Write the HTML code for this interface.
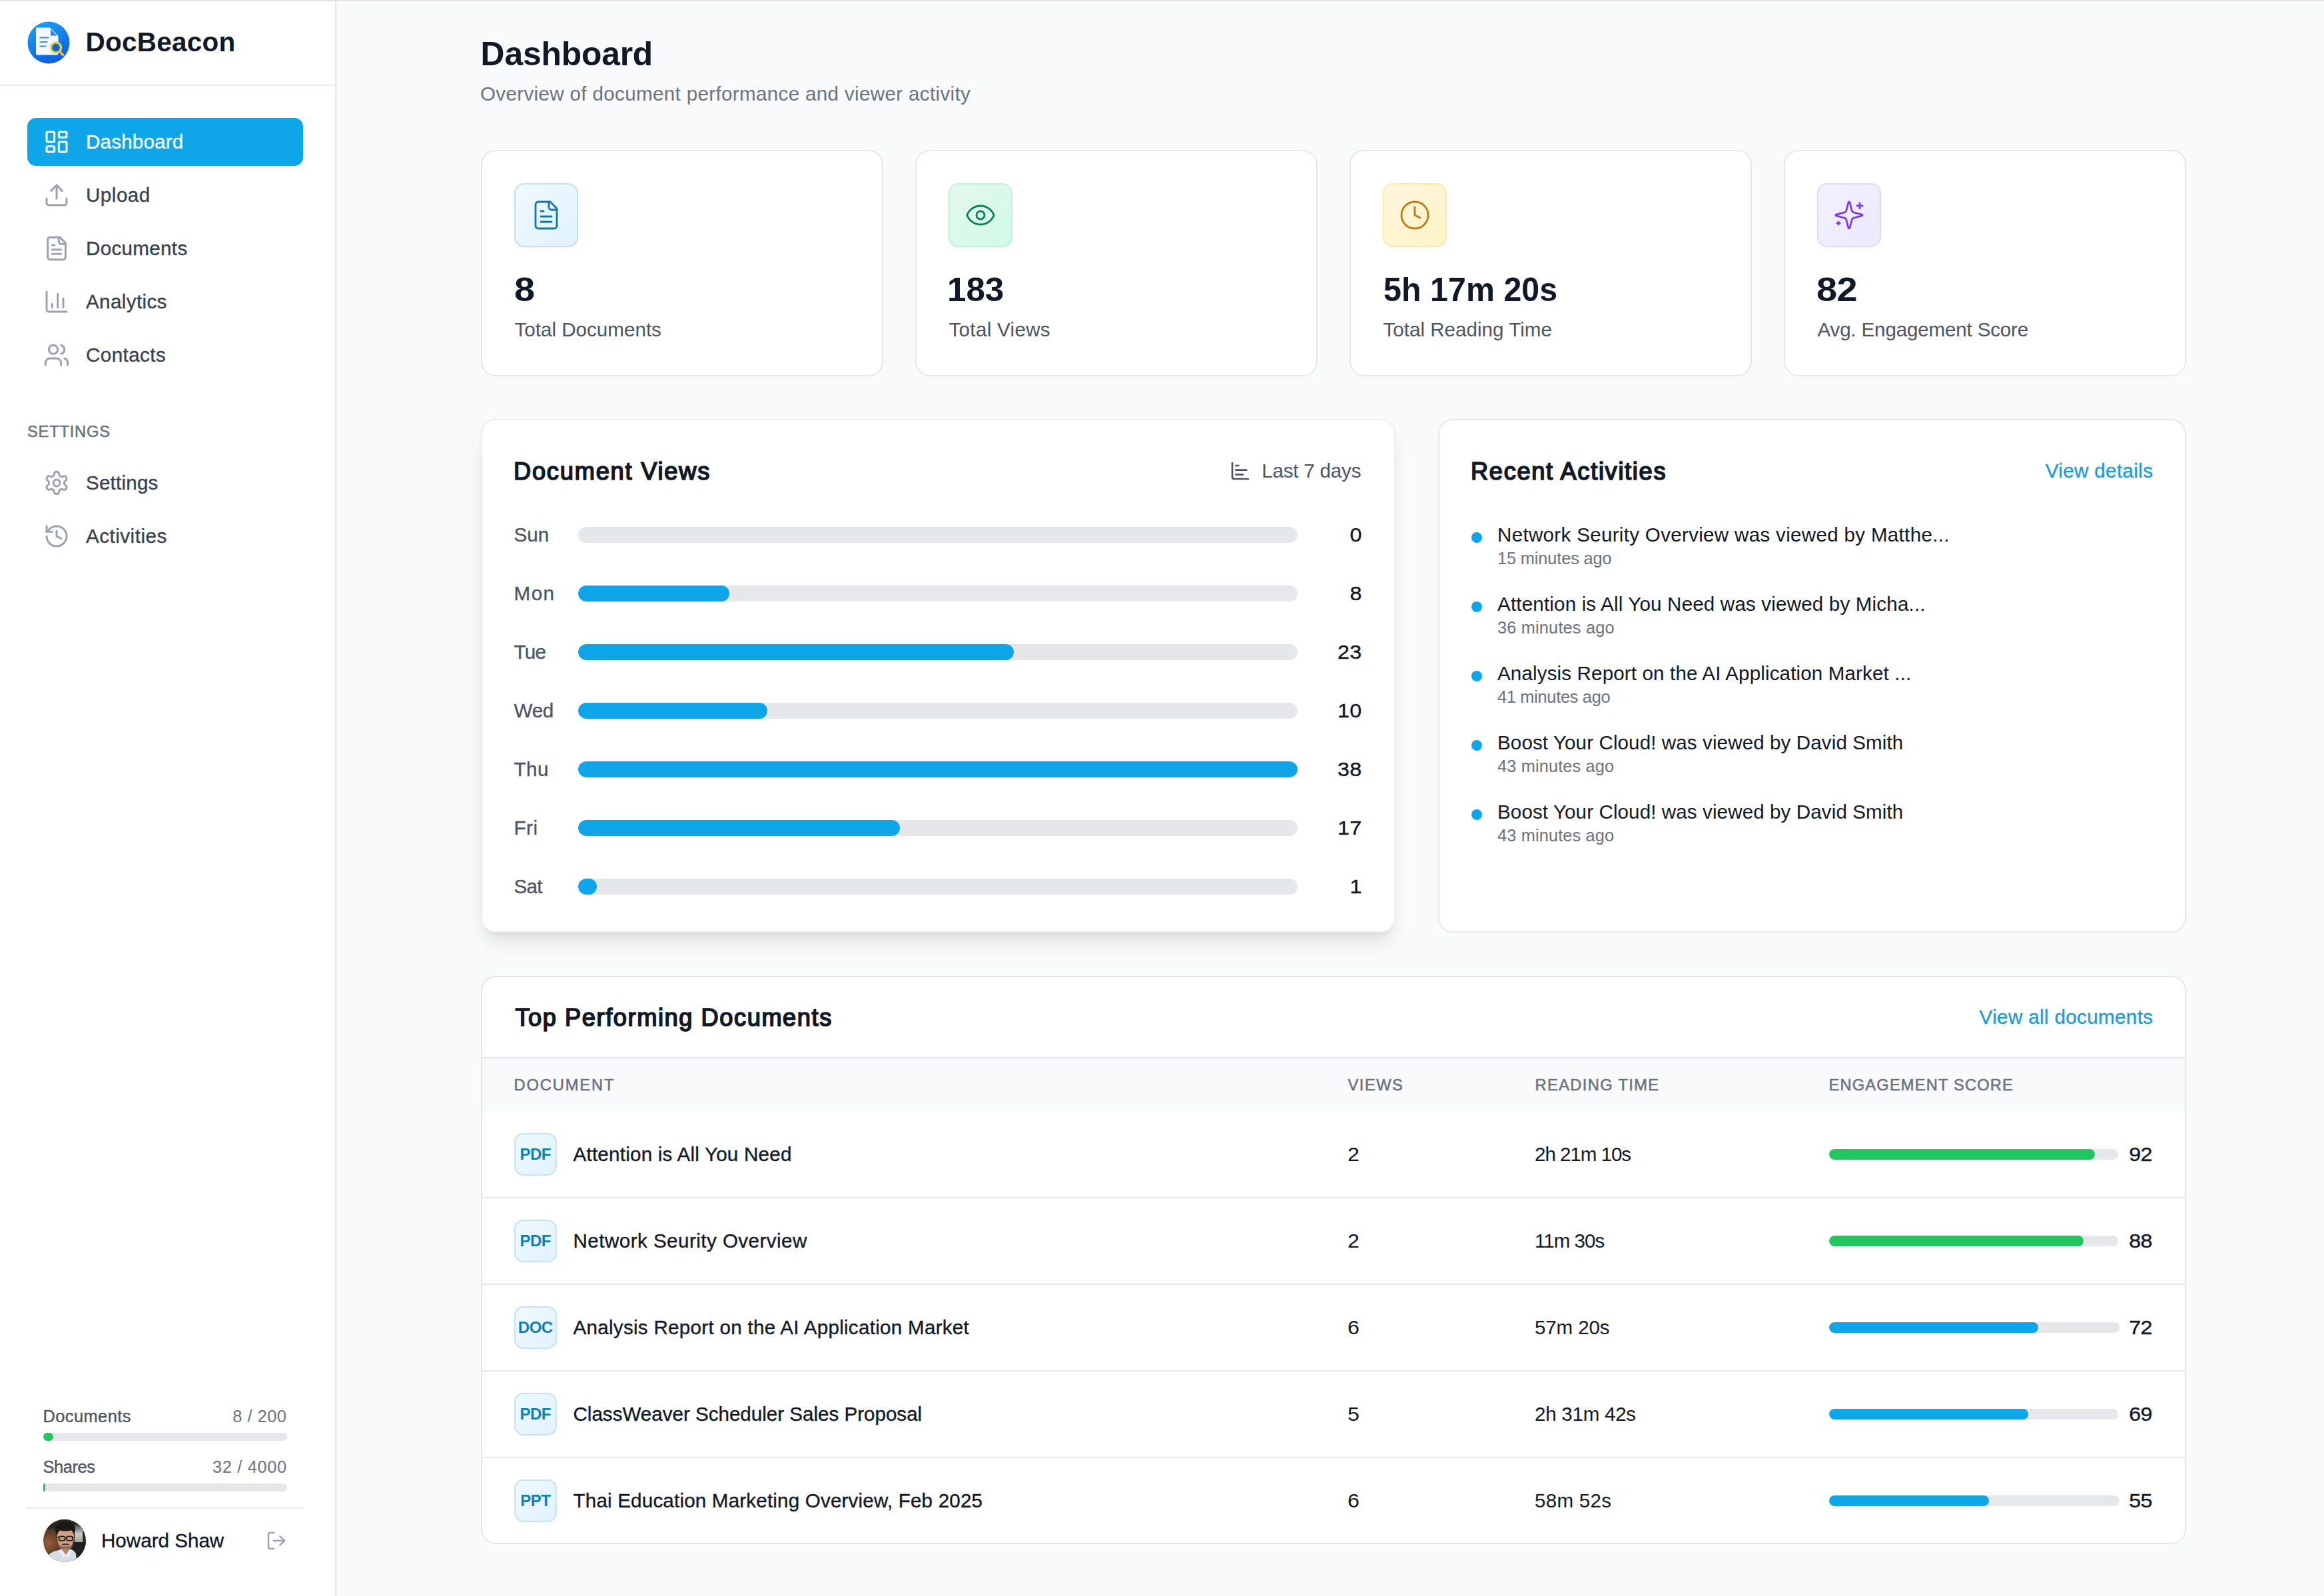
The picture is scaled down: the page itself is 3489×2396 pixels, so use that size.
<!DOCTYPE html>
<html lang="en">
<head>
<meta charset="utf-8">
<title>DocBeacon - Dashboard</title>
<style>
*{box-sizing:border-box;margin:0;padding:0}
html,body{width:3489px;height:2396px;overflow:hidden}
body{font-family:"Liberation Sans",sans-serif;background:#f9fafb;color:#111827;position:relative}
.abs{position:absolute}
.t{position:absolute;white-space:nowrap;line-height:1}
svg.ic{position:absolute;fill:none;stroke-width:1.5;stroke-linecap:round;stroke-linejoin:round}
#topline{left:0;top:0;width:3489px;height:2px;background:linear-gradient(#dcdee2,#e9ebee)}
#topband{left:505px;top:2px;width:2984px;height:4px;background:#fcfcfd}
#sidebar{left:0;top:0;width:505px;height:2396px;background:#fff;border-right:2px solid #e8eaed}
#brandline{left:0;top:127px;width:503px;height:2px;background:#e8eaed}
#navactive{left:41px;top:177px;width:414px;height:72px;border-radius:13px;background:#0ea5e9}
.qbar{position:absolute;left:65px;width:366px;height:12px;border-radius:6px;background:#e5e7eb}
.qbar i{display:block;height:12px;border-radius:6px;background:#22c55e}
#sideline{left:40px;top:2263px;width:416px;height:2px;background:#e8eaed}
.card{position:absolute;background:#fff;border:2px solid #e6e7eb;border-radius:22px}
.stat{top:225px;width:604px;height:340px}
.ibox{position:absolute;left:48px;top:48px;box-shadow:0 2px 4px rgba(0,0,0,.04);width:96px;height:96px;border-radius:15px;border:2px solid}
.ibox svg{position:absolute;left:22px;top:22px;width:48px;height:48px;fill:none;stroke-width:1.4;stroke-linecap:round;stroke-linejoin:round}
.vbar{position:absolute;left:868px;width:1080px;height:24px;border-radius:12px;background:#e5e7eb;overflow:hidden}
.vbar i{display:block;height:24px;border-radius:12px;background:#0ea5e9}
.dot{width:16px;height:16px;border-radius:8px;background:#0ea5e9}
.badge{width:64px;height:64px;border-radius:14px;border:2px solid #c5e3f4;background:linear-gradient(135deg,#f0f9ff,#e0f2fe)}
.sbar{position:absolute;left:2746px;width:434px;height:16px;border-radius:8px;background:#e5e7eb;overflow:hidden}
.sbar i{display:block;height:16px;border-radius:8px}

</style>
</head>
<body>
<div class="abs" id="sidebar"></div>
<div class="abs" id="topline"></div><div class="abs" id="topband"></div>
<div class="abs" id="brandline"></div>
<svg class="abs" id="logo" style="left:41px;top:32px;width:64px;height:64px" viewBox="0 0 64 64">
<defs><linearGradient id="lg" x1="0.25" y1="0" x2="0.7" y2="1"><stop offset="0" stop-color="#1ca0f2"/><stop offset="1" stop-color="#0c5be0"/></linearGradient></defs>
<circle cx="32" cy="32" r="31.500" fill="url(#lg)"/>
<path d="M15 9.500h19L46.500 22v26.500a2 2 0 0 1-2 2H15a2 2 0 0 1-2-2v-37a2 2 0 0 1 2-2z" fill="#f5f9fd"/>
<path d="M35 12v9.500h9.500z" fill="#2f7fe2"/>
<path d="M19.500 24.500h12M19.500 31h10M19.500 37.500h8" stroke="#2f8fe6" stroke-width="2.200" stroke-linecap="round" fill="none"/>
<circle cx="43" cy="39.500" r="7.600" fill="#1766c8" stroke="#d9d65a" stroke-width="3.400"/>
<path d="M49.300 46l4.200 4.300" stroke="#e2b53c" stroke-width="3.800" stroke-linecap="round"/>
</svg>
<div class="abs" id="navactive"></div>
<svg class="ic" id="ni0" style="left:65px;top:193px;width:40px;height:40px;stroke:#fff;stroke-width:1.8" viewBox="0 0 24 24"><rect x="3" y="3" width="7" height="9" rx="1"/><rect x="14" y="3" width="7" height="5" rx="1"/><rect x="14" y="12" width="7" height="9" rx="1"/><rect x="3" y="16" width="7" height="5" rx="1"/></svg>
<svg class="ic" id="ni1" style="left:65px;top:273px;width:40px;height:40px;stroke:#9ca3af;stroke-width:1.8" viewBox="0 0 24 24"><path d="M21 15v4a2 2 0 0 1-2 2H5a2 2 0 0 1-2-2v-4"/><path d="m17 8-5-5-5 5"/><path d="M12 3v12"/></svg>
<svg class="ic" id="ni2" style="left:65px;top:353px;width:40px;height:40px;stroke:#9ca3af;stroke-width:1.8" viewBox="0 0 24 24"><path d="M15 2H6a2 2 0 0 0-2 2v16a2 2 0 0 0 2 2h12a2 2 0 0 0 2-2V7Z"/><path d="M14 2v4a2 2 0 0 0 2 2h4"/><path d="M10 9H8"/><path d="M16 13H8"/><path d="M16 17H8"/></svg>
<svg class="ic" id="ni3" style="left:65px;top:433px;width:40px;height:40px;stroke:#9ca3af;stroke-width:1.8" viewBox="0 0 24 24"><path d="M3 3v16a2 2 0 0 0 2 2h16"/><path d="M18 17V9"/><path d="M13 17V5"/><path d="M8 17v-3"/></svg>
<svg class="ic" id="ni4" style="left:65px;top:513px;width:40px;height:40px;stroke:#9ca3af;stroke-width:1.8" viewBox="0 0 24 24"><path d="M16 21v-2a4 4 0 0 0-4-4H6a4 4 0 0 0-4 4v2"/><circle cx="9" cy="7" r="4"/><path d="M22 21v-2a4 4 0 0 0-3-3.87"/><path d="M16 3.13a4 4 0 0 1 0 7.75"/></svg>
<svg class="ic" id="ni5" style="left:65px;top:705px;width:40px;height:40px;stroke:#9ca3af;stroke-width:1.8" viewBox="0 0 24 24"><path d="M12.22 2h-.44a2 2 0 0 0-2 2v.18a2 2 0 0 1-1 1.73l-.43.25a2 2 0 0 1-2 0l-.15-.08a2 2 0 0 0-2.73.73l-.22.38a2 2 0 0 0 .73 2.73l.15.1a2 2 0 0 1 1 1.72v.51a2 2 0 0 1-1 1.74l-.15.09a2 2 0 0 0-.73 2.73l.22.38a2 2 0 0 0 2.73.73l.15-.08a2 2 0 0 1 2 0l.43.25a2 2 0 0 1 1 1.73V20a2 2 0 0 0 2 2h.44a2 2 0 0 0 2-2v-.18a2 2 0 0 1 1-1.73l.43-.25a2 2 0 0 1 2 0l.15.08a2 2 0 0 0 2.73-.73l.22-.39a2 2 0 0 0-.73-2.73l-.15-.08a2 2 0 0 1-1-1.74v-.5a2 2 0 0 1 1-1.74l.15-.09a2 2 0 0 0 .73-2.73l-.22-.38a2 2 0 0 0-2.73-.73l-.15.08a2 2 0 0 1-2 0l-.43-.25a2 2 0 0 1-1-1.73V4a2 2 0 0 0-2-2z"/><circle cx="12" cy="12" r="3"/></svg>
<svg class="ic" id="ni6" style="left:65px;top:785px;width:40px;height:40px;stroke:#9ca3af;stroke-width:1.8" viewBox="0 0 24 24"><path d="M3 12a9 9 0 1 0 9-9 9.75 9.75 0 0 0-6.74 2.74L3 8"/><path d="M3 3v5h5"/><path d="M12 7v5l4 2"/></svg>
<div class="qbar" style="top:2151px"><i style="width:15px"></i></div>
<div class="qbar" style="top:2227px"><i style="width:3px"></i></div>
<div class="abs" id="sideline"></div>
<svg class="abs" id="avatar" style="left:65px;top:2281px;width:64px;height:64px" viewBox="0 0 64 64">
<defs><clipPath id="avc"><circle cx="32" cy="32" r="32"/></clipPath>
<radialGradient id="avl" cx="0.12" cy="0.55" r="0.42"><stop offset="0" stop-color="#9a5f38"/><stop offset="1" stop-color="#3a2a22"/></radialGradient>
<linearGradient id="avr" x1="0" y1="0" x2="0" y2="1"><stop offset="0" stop-color="#4a4a46"/><stop offset=".4" stop-color="#c9cbc6"/><stop offset="1" stop-color="#8d8f8b"/></linearGradient></defs>
<g clip-path="url(#avc)">
<rect width="64" height="64" fill="url(#avl)"/>
<rect x="0" y="0" width="64" height="14" fill="#2b2421" opacity=".8"/>
<rect x="47" y="8" width="12" height="34" fill="url(#avr)"/>
<rect x="44" y="34" width="20" height="30" fill="#1f2022"/>
<ellipse cx="33" cy="15.500" rx="15" ry="12.500" fill="#1c1816"/>
<path d="M21 25c0-6.500 5-11.500 12.500-11.500S46 18.500 46 25c0 5-1 10-2.500 14-2 5.500-6 9.500-10 9.500s-8-4-10-9.500C22 35 21 30 21 25z" fill="#cf9f84"/>
<path d="M19.500 25c0-9.500 6-16 14-16s14 6.500 14 16c-1.500-5-3-7.500-4.500-9-5.500 2-13.500 2-19 0-2 1.500-3 4-4.500 9z" fill="#1c1816"/>
<path d="M23.500 37c1.500 6 5.500 11.500 10 11.500s8.500-5.500 10-11.500c-2 3-5.500 4.500-10 4.500s-8-1.500-10-4.500z" fill="#5f4236" opacity=".7"/>
<path d="M27.500 37.500c2-1.800 10-1.800 12 0-1 2.500-3.500 3.500-6 3.500s-5-1-6-3.500z" fill="#3b2620" opacity=".85"/>
<path d="M30 39.200c2.300.9 5 .9 7.300 0" stroke="#efe6df" stroke-width="1.100" fill="none" stroke-linecap="round"/>
<rect x="23.500" y="25.500" width="9" height="6.500" rx="2.200" fill="#c3957c" stroke="#15110e" stroke-width="1.500"/>
<rect x="35" y="25.500" width="9" height="6.500" rx="2.200" fill="#c3957c" stroke="#15110e" stroke-width="1.500"/>
<path d="M32.500 28h2.500M23.500 27.500l-2.500-1M44 27.500l2.500-1" stroke="#15110e" stroke-width="1.300"/>
<path d="M3 64c2-10 8-15 17-17l8-2.500 5.500 5 5.500-5c5 1 8 3 10 7l1 12.500z" fill="#d5dde7"/>
<path d="M27.500 45l6.500 8.500 5.500-8.500-2-1.500h-8z" fill="#b4876f"/>
<path d="M34 53.500l-8-8.500-2.500 2 6.500 10zM34 53.500l6.500-8.500 2.500 2-5.500 10z" fill="#e9edf2"/>
</g></svg>
<svg class="abs" style="left:399px;top:2297px;width:32px;height:32px;fill:none;stroke:#9ca3af;stroke-width:1.9;stroke-linecap:round;stroke-linejoin:round" viewBox="0 0 24 24"><path d="M9 21H5a2 2 0 0 1-2-2V5a2 2 0 0 1 2-2h4"/><path d="m16 17 5-5-5-5"/><path d="M21 12H9"/></svg>
<div class="card stat" style="left:722px"><div class="ibox" style="background:linear-gradient(135deg,#f0f9ff,#e0f2fe);border-color:#c6dff0"><svg viewBox="0 0 24 24" stroke="#0f76ad"><path d="M15 2H6a2 2 0 0 0-2 2v16a2 2 0 0 0 2 2h12a2 2 0 0 0 2-2V7Z"/><path d="M14 2v4a2 2 0 0 0 2 2h4"/><path d="M10 9H8"/><path d="M16 13H8"/><path d="M16 17H8"/></svg></div></div>
<div class="card stat" style="left:1374px"><div class="ibox" style="background:linear-gradient(135deg,#e3f9ee,#d1fae5);border-color:#c0efdb"><svg viewBox="0 0 24 24" stroke="#0a8059"><path d="M2.062 12.348a1 1 0 0 1 0-.696 10.75 10.75 0 0 1 19.876 0 1 1 0 0 1 0 .696 10.75 10.75 0 0 1-19.876 0"/><circle cx="12" cy="12" r="3"/></svg></div></div>
<div class="card stat" style="left:2026px"><div class="ibox" style="background:linear-gradient(135deg,#fff7dc,#fef3c7);border-color:#fbe9b0"><svg viewBox="0 0 24 24" stroke="#c8761a"><circle cx="12" cy="12" r="10"/><path d="M12 6v6l4 2"/></svg></div></div>
<div class="card stat" style="left:2678px"><div class="ibox" style="background:linear-gradient(135deg,#f3f0ff,#ede9fe);border-color:#e0daf8"><svg viewBox="0 0 24 24" stroke="#7c3aed"><path d="M9.937 15.5A2 2 0 0 0 8.5 14.063l-6.135-1.582a.5.5 0 0 1 0-.962L8.5 9.936A2 2 0 0 0 9.937 8.5l1.582-6.135a.5.5 0 0 1 .963 0L14.063 8.5A2 2 0 0 0 15.5 9.937l6.135 1.581a.5.5 0 0 1 0 .964L15.5 14.063a2 2 0 0 0-1.437 1.437l-1.582 6.135a.5.5 0 0 1-.963 0z"/><path d="M20 3v4"/><path d="M22 5h-4"/><path d="M4 17v2"/><path d="M5 18H3"/></svg></div></div>
<div class="card" id="viewscard" style="left:722px;top:629px;width:1373px;height:771px;border-color:#eceef1;box-shadow:0 20px 30px -6px rgba(0,0,0,.10),0 8px 12px -8px rgba(0,0,0,.10)"></div>
<svg class="abs" style="left:1846px;top:691px;width:32px;height:32px;fill:none;stroke:#4b5563;stroke-width:2;stroke-linecap:round;stroke-linejoin:round" viewBox="0 0 24 24"><path d="M3 3v16a2 2 0 0 0 2 2h16"/><path d="M7 16h8"/><path d="M7 11h12"/><path d="M7 6h3"/></svg>
<div class="vbar" style="top:791px"></div>
<div class="vbar" style="top:879px"><i style="width:227.4px"></i></div>
<div class="vbar" style="top:967px"><i style="width:653.7px"></i></div>
<div class="vbar" style="top:1055px"><i style="width:284.2px"></i></div>
<div class="vbar" style="top:1143px"><i style="width:1080.0px"></i></div>
<div class="vbar" style="top:1231px"><i style="width:483.2px"></i></div>
<div class="vbar" style="top:1319px"><i style="width:28.4px"></i></div>
<div class="card" id="actcard" style="left:2159px;top:629px;width:1123px;height:771px"></div>
<div class="abs dot" style="left:2209px;top:799px"></div>
<div class="abs dot" style="left:2209px;top:903px"></div>
<div class="abs dot" style="left:2209px;top:1007px"></div>
<div class="abs dot" style="left:2209px;top:1111px"></div>
<div class="abs dot" style="left:2209px;top:1215px"></div>
<div class="card" id="tablecard" style="left:722px;top:1465px;width:2560px;height:853px;overflow:hidden">
<div class="abs" style="left:0;top:120px;width:2556px;height:2px;background:#e5e7eb"></div>
<div class="abs" style="left:0;top:122px;width:2556px;height:80px;background:#f9fafb"></div>
<div class="abs" style="left:0;top:330px;width:2556px;height:2px;background:#e5e7eb"></div>
<div class="abs" style="left:0;top:460px;width:2556px;height:2px;background:#e5e7eb"></div>
<div class="abs" style="left:0;top:590px;width:2556px;height:2px;background:#e5e7eb"></div>
<div class="abs" style="left:0;top:720px;width:2556px;height:2px;background:#e5e7eb"></div>
</div>
<div class="abs badge" style="left:772px;top:1701px"></div>
<div class="sbar" id="sb0" style="top:1725px"><i style="width:92%;background:#22c55e"></i></div>
<div class="abs badge" style="left:772px;top:1831px"></div>
<div class="sbar" id="sb1" style="top:1855px"><i style="width:88%;background:#22c55e"></i></div>
<div class="abs badge" style="left:772px;top:1961px"></div>
<div class="sbar" id="sb2" style="width:436px;top:1985px"><i style="width:72%;background:#0ea5e9"></i></div>
<div class="abs badge" style="left:772px;top:2091px"></div>
<div class="sbar" id="sb3" style="top:2115px"><i style="width:69%;background:#0ea5e9"></i></div>
<div class="abs badge" style="left:772px;top:2221px"></div>
<div class="sbar" id="sb4" style="width:436px;top:2245px"><i style="width:55%;background:#0ea5e9"></i></div>
<div class="t" id="brand" style="top:43.32px;font-size:40.5px;color:#111827;font-weight:700;letter-spacing:0.250px;left:128.50px;">DocBeacon</div>
<div class="t" id="n1" style="top:197.74px;font-size:29.6px;color:#fff;letter-spacing:0.185px;-webkit-text-stroke:0.35px #fff;left:129.00px;">Dashboard</div>
<div class="t" id="n2" style="top:277.74px;font-size:29.6px;color:#374151;letter-spacing:0.500px;-webkit-text-stroke:0.35px #374151;left:129.00px;">Upload</div>
<div class="t" id="n3" style="top:357.74px;font-size:29.6px;color:#374151;letter-spacing:0.315px;-webkit-text-stroke:0.35px #374151;left:129.00px;">Documents</div>
<div class="t" id="n4" style="top:437.74px;font-size:29.6px;color:#374151;letter-spacing:0.375px;-webkit-text-stroke:0.35px #374151;left:129.00px;">Analytics</div>
<div class="t" id="n5" style="top:517.74px;font-size:29.6px;color:#374151;letter-spacing:0.429px;-webkit-text-stroke:0.35px #374151;left:129.00px;">Contacts</div>
<div class="t" id="n6" style="top:709.74px;font-size:29.6px;color:#374151;letter-spacing:0.213px;-webkit-text-stroke:0.35px #374151;left:129.00px;">Settings</div>
<div class="t" id="n7" style="top:789.74px;font-size:29.6px;color:#374151;letter-spacing:0.499px;-webkit-text-stroke:0.35px #374151;left:129.00px;">Activities</div>
<div class="t" id="settingslabel" style="top:636.74px;font-size:23.7px;color:#6b7280;letter-spacing:0.786px;-webkit-text-stroke:0.55px #6b7280;left:41.00px;">SETTINGS</div>
<div class="t" id="q1" style="top:2113.50px;font-size:25.4px;color:#4b5563;letter-spacing:0.435px;-webkit-text-stroke:0.35px #4b5563;left:64.50px;">Documents</div>
<div class="t" id="q2" style="top:2113.50px;font-size:25.4px;color:#6b7280;letter-spacing:0.500px;right:3058.50px;">8 / 200</div>
<div class="t" id="q3" style="top:2189.50px;font-size:25.4px;color:#4b5563;letter-spacing:-0.400px;-webkit-text-stroke:0.35px #4b5563;left:64.50px;">Shares</div>
<div class="t" id="q4" style="top:2189.50px;font-size:25.4px;color:#6b7280;letter-spacing:0.625px;right:3058.38px;">32 / 4000</div>
<div class="t" id="username" style="top:2298.34px;font-size:29.6px;color:#111827;-webkit-text-stroke:0.35px #111827;left:152.00px;">Howard Shaw</div>
<div class="t" id="h1" style="top:57.34px;font-size:49.8px;color:#111827;font-weight:700;letter-spacing:-0.175px;left:721.60px;">Dashboard</div>
<div class="t" id="sub" style="top:125.74px;font-size:29.6px;color:#6b7280;letter-spacing:0.334px;left:721.00px;">Overview of document performance and viewer activity</div>
<div class="t" id="s1n" style="top:410.10px;font-size:49.5px;color:#111827;font-weight:700;transform:scaleX(1.13);transform-origin:0 0;left:772.30px;">8</div>
<div class="t" id="s1l" style="top:479.94px;font-size:29.6px;color:#4b5563;left:772.50px;">Total Documents</div>
<div class="t" id="s2n" style="top:410.10px;font-size:49.5px;color:#111827;font-weight:700;letter-spacing:-0.100px;transform:scaleX(1.035);transform-origin:0 0;left:1421.90px;">183</div>
<div class="t" id="s2l" style="top:479.94px;font-size:29.6px;color:#4b5563;letter-spacing:0.300px;left:1424.50px;">Total Views</div>
<div class="t" id="s3n" style="top:410.10px;font-size:49.5px;color:#111827;font-weight:700;letter-spacing:0.044px;transform:scaleX(0.977);transform-origin:0 0;left:2076.60px;">5h 17m 20s</div>
<div class="t" id="s3l" style="top:479.94px;font-size:29.6px;color:#4b5563;letter-spacing:0.001px;left:2076.50px;">Total Reading Time</div>
<div class="t" id="s4n" style="top:410.10px;font-size:49.5px;color:#111827;font-weight:700;letter-spacing:-0.600px;transform:scaleX(1.13);transform-origin:0 0;left:2727.30px;">82</div>
<div class="t" id="s4l" style="top:479.94px;font-size:29.6px;color:#4b5563;letter-spacing:-0.175px;left:2728.50px;">Avg. Engagement Score</div>
<div class="t" id="dvt" style="top:689.86px;font-size:36.2px;color:#111827;letter-spacing:1.801px;-webkit-text-stroke:1.7px #111827;left:771.00px;">Document Views</div>
<div class="t" id="l7d" style="top:692.44px;font-size:29.6px;color:#4b5563;letter-spacing:-0.200px;right:1445.70px;">Last 7 days</div>
<div class="t" id="d0" style="top:787.74px;font-size:29.6px;color:#4b5563;-webkit-text-stroke:0.35px #4b5563;left:771.50px;">Sun</div>
<div class="t" id="v0" style="top:787.74px;font-size:29.6px;color:#111827;letter-spacing:0.400px;-webkit-text-stroke:0.35px #111827;transform:scaleX(1.09);transform-origin:100% 0;right:1444.60px;">0</div>
<div class="t" id="d1" style="top:875.74px;font-size:29.6px;color:#4b5563;letter-spacing:1.500px;-webkit-text-stroke:0.35px #4b5563;left:771.50px;">Mon</div>
<div class="t" id="v1" style="top:875.74px;font-size:29.6px;color:#111827;letter-spacing:0.400px;-webkit-text-stroke:0.35px #111827;transform:scaleX(1.09);transform-origin:100% 0;right:1444.60px;">8</div>
<div class="t" id="d2" style="top:963.74px;font-size:29.6px;color:#4b5563;letter-spacing:-0.750px;-webkit-text-stroke:0.35px #4b5563;left:771.50px;">Tue</div>
<div class="t" id="v2" style="top:963.74px;font-size:29.6px;color:#111827;letter-spacing:0.400px;-webkit-text-stroke:0.35px #111827;transform:scaleX(1.09);transform-origin:100% 0;right:1444.60px;">23</div>
<div class="t" id="d3" style="top:1051.74px;font-size:29.6px;color:#4b5563;letter-spacing:-0.250px;-webkit-text-stroke:0.35px #4b5563;left:771.50px;">Wed</div>
<div class="t" id="v3" style="top:1051.74px;font-size:29.6px;color:#111827;letter-spacing:0.400px;-webkit-text-stroke:0.35px #111827;transform:scaleX(1.09);transform-origin:100% 0;right:1444.60px;">10</div>
<div class="t" id="d4" style="top:1139.74px;font-size:29.6px;color:#4b5563;letter-spacing:0.500px;-webkit-text-stroke:0.35px #4b5563;left:771.50px;">Thu</div>
<div class="t" id="v4" style="top:1139.74px;font-size:29.6px;color:#111827;letter-spacing:0.400px;-webkit-text-stroke:0.35px #111827;transform:scaleX(1.09);transform-origin:100% 0;right:1444.60px;">38</div>
<div class="t" id="d5" style="top:1227.74px;font-size:29.6px;color:#4b5563;letter-spacing:0.500px;-webkit-text-stroke:0.35px #4b5563;left:771.50px;">Fri</div>
<div class="t" id="v5" style="top:1227.74px;font-size:29.6px;color:#111827;letter-spacing:0.400px;-webkit-text-stroke:0.35px #111827;transform:scaleX(1.09);transform-origin:100% 0;right:1444.60px;">17</div>
<div class="t" id="d6" style="top:1315.74px;font-size:29.6px;color:#4b5563;letter-spacing:-0.750px;-webkit-text-stroke:0.35px #4b5563;left:771.50px;">Sat</div>
<div class="t" id="v6" style="top:1315.74px;font-size:29.6px;color:#111827;letter-spacing:0.400px;-webkit-text-stroke:0.35px #111827;transform:scaleX(1.09);transform-origin:100% 0;right:1444.60px;">1</div>
<div class="t" id="rat" style="top:689.86px;font-size:36.2px;color:#111827;letter-spacing:1.688px;-webkit-text-stroke:1.7px #111827;left:2208.00px;">Recent Activities</div>
<div class="t" id="vd" style="top:692.44px;font-size:29.6px;color:#1d9bd6;letter-spacing:0.364px;-webkit-text-stroke:0.35px #1d9bd6;right:256.64px;">View details</div>
<div class="t" id="a0" style="top:788.14px;font-size:29.6px;color:#111827;letter-spacing:0.297px;left:2248.00px;">Network Seurity Overview was viewed by Matthe...</div>
<div class="t" id="at0" style="top:825.90px;font-size:25.4px;color:#6b7280;letter-spacing:-0.153px;left:2248.00px;">15 minutes ago</div>
<div class="t" id="a1" style="top:892.14px;font-size:29.6px;color:#111827;letter-spacing:0.160px;left:2248.00px;">Attention is All You Need was viewed by Micha...</div>
<div class="t" id="at1" style="top:929.90px;font-size:25.4px;color:#6b7280;letter-spacing:0.152px;left:2248.00px;">36 minutes ago</div>
<div class="t" id="a2" style="top:996.14px;font-size:29.6px;color:#111827;letter-spacing:0.128px;left:2248.00px;">Analysis Report on the AI Application Market ...</div>
<div class="t" id="at2" style="top:1033.90px;font-size:25.4px;color:#6b7280;letter-spacing:-0.308px;left:2248.00px;">41 minutes ago</div>
<div class="t" id="a3" style="top:1100.14px;font-size:29.6px;color:#111827;letter-spacing:0.094px;left:2248.00px;">Boost Your Cloud! was viewed by David Smith</div>
<div class="t" id="at3" style="top:1137.90px;font-size:25.4px;color:#6b7280;letter-spacing:0.116px;left:2248.00px;">43 minutes ago</div>
<div class="t" id="a4" style="top:1204.14px;font-size:29.6px;color:#111827;letter-spacing:0.094px;left:2248.00px;">Boost Your Cloud! was viewed by David Smith</div>
<div class="t" id="at4" style="top:1241.90px;font-size:25.4px;color:#6b7280;letter-spacing:0.116px;left:2248.00px;">43 minutes ago</div>
<div class="t" id="tpt" style="top:1509.86px;font-size:36.2px;color:#111827;letter-spacing:1.583px;-webkit-text-stroke:1.7px #111827;left:773.40px;">Top Performing Documents</div>
<div class="t" id="vad" style="top:1511.94px;font-size:29.6px;color:#1d9bd6;letter-spacing:0.352px;-webkit-text-stroke:0.35px #1d9bd6;right:256.65px;">View all documents</div>
<div class="t" id="th0" style="top:1618.14px;font-size:23.7px;color:#6b7280;letter-spacing:1.857px;-webkit-text-stroke:0.55px #6b7280;left:771.50px;">DOCUMENT</div>
<div class="t" id="th1" style="top:1618.14px;font-size:23.7px;color:#6b7280;letter-spacing:1.500px;-webkit-text-stroke:0.55px #6b7280;left:2023.50px;">VIEWS</div>
<div class="t" id="th2" style="top:1618.14px;font-size:23.7px;color:#6b7280;letter-spacing:1.365px;-webkit-text-stroke:0.55px #6b7280;left:2304.50px;">READING TIME</div>
<div class="t" id="th3" style="top:1618.14px;font-size:23.7px;color:#6b7280;letter-spacing:1.167px;-webkit-text-stroke:0.55px #6b7280;left:2745.50px;">ENGAGEMENT SCORE</div>
<div class="t" id="b0" style="top:1721.38px;font-size:24px;color:#0f80b8;font-weight:700;letter-spacing:-0.500px;left:703.75px;width:200px;text-align:center;">PDF</div>
<div class="t" id="t0" style="top:1718.14px;font-size:29.6px;color:#111827;letter-spacing:0.227px;-webkit-text-stroke:0.35px #111827;left:860.50px;">Attention is All You Need</div>
<div class="t" id="tv0" style="top:1718.14px;font-size:29.6px;color:#111827;transform:scaleX(1.09);transform-origin:0 0;left:2023.00px;">2</div>
<div class="t" id="tr0" style="top:1718.14px;font-size:29.6px;color:#111827;letter-spacing:-1.057px;left:2304.00px;">2h 21m 10s</div>
<div class="t" id="ts0" style="top:1718.14px;font-size:29.6px;color:#111827;letter-spacing:-0.600px;-webkit-text-stroke:0.35px #111827;transform:scaleX(1.09);transform-origin:100% 0;right:257.80px;">92</div>
<div class="t" id="b1" style="top:1851.38px;font-size:24px;color:#0f80b8;font-weight:700;letter-spacing:-0.500px;left:703.75px;width:200px;text-align:center;">PDF</div>
<div class="t" id="t1" style="top:1848.14px;font-size:29.6px;color:#111827;letter-spacing:0.456px;-webkit-text-stroke:0.35px #111827;left:860.50px;">Network Seurity Overview</div>
<div class="t" id="tv1" style="top:1848.14px;font-size:29.6px;color:#111827;transform:scaleX(1.09);transform-origin:0 0;left:2023.00px;">2</div>
<div class="t" id="tr1" style="top:1848.14px;font-size:29.6px;color:#111827;letter-spacing:-1.001px;left:2304.00px;">11m 30s</div>
<div class="t" id="ts1" style="top:1848.14px;font-size:29.6px;color:#111827;letter-spacing:-0.600px;-webkit-text-stroke:0.35px #111827;transform:scaleX(1.09);transform-origin:100% 0;right:258.20px;">88</div>
<div class="t" id="b2" style="top:1981.38px;font-size:24px;color:#0f80b8;font-weight:700;letter-spacing:-0.500px;left:703.75px;width:200px;text-align:center;">DOC</div>
<div class="t" id="t2" style="top:1978.14px;font-size:29.6px;color:#111827;letter-spacing:0.279px;-webkit-text-stroke:0.35px #111827;left:860.50px;">Analysis Report on the AI Application Market</div>
<div class="t" id="tv2" style="top:1978.14px;font-size:29.6px;color:#111827;transform:scaleX(1.09);transform-origin:0 0;left:2023.00px;">6</div>
<div class="t" id="tr2" style="top:1978.14px;font-size:29.6px;color:#111827;letter-spacing:-0.166px;left:2304.00px;">57m 20s</div>
<div class="t" id="ts2" style="top:1978.14px;font-size:29.6px;color:#111827;letter-spacing:-0.600px;-webkit-text-stroke:0.35px #111827;transform:scaleX(1.09);transform-origin:100% 0;right:258.20px;">72</div>
<div class="t" id="b3" style="top:2111.38px;font-size:24px;color:#0f80b8;font-weight:700;letter-spacing:-0.500px;left:703.75px;width:200px;text-align:center;">PDF</div>
<div class="t" id="t3" style="top:2108.14px;font-size:29.6px;color:#111827;letter-spacing:-0.015px;-webkit-text-stroke:0.35px #111827;left:860.50px;">ClassWeaver Scheduler Sales Proposal</div>
<div class="t" id="tv3" style="top:2108.14px;font-size:29.6px;color:#111827;transform:scaleX(1.09);transform-origin:0 0;left:2023.00px;">5</div>
<div class="t" id="tr3" style="top:2108.14px;font-size:29.6px;color:#111827;letter-spacing:-0.278px;left:2304.00px;">2h 31m 42s</div>
<div class="t" id="ts3" style="top:2108.14px;font-size:29.6px;color:#111827;letter-spacing:-0.600px;-webkit-text-stroke:0.35px #111827;transform:scaleX(1.09);transform-origin:100% 0;right:258.20px;">69</div>
<div class="t" id="b4" style="top:2241.38px;font-size:24px;color:#0f80b8;font-weight:700;letter-spacing:-0.500px;left:703.75px;width:200px;text-align:center;">PPT</div>
<div class="t" id="t4" style="top:2238.14px;font-size:29.6px;color:#111827;letter-spacing:0.179px;-webkit-text-stroke:0.35px #111827;left:860.50px;">Thai Education Marketing Overview, Feb 2025</div>
<div class="t" id="tv4" style="top:2238.14px;font-size:29.6px;color:#111827;transform:scaleX(1.09);transform-origin:0 0;left:2023.00px;">6</div>
<div class="t" id="tr4" style="top:2238.14px;font-size:29.6px;color:#111827;letter-spacing:0.249px;left:2304.00px;">58m 52s</div>
<div class="t" id="ts4" style="top:2238.14px;font-size:29.6px;color:#111827;letter-spacing:-0.600px;-webkit-text-stroke:0.35px #111827;transform:scaleX(1.09);transform-origin:100% 0;right:258.20px;">55</div>
</body>
</html>
